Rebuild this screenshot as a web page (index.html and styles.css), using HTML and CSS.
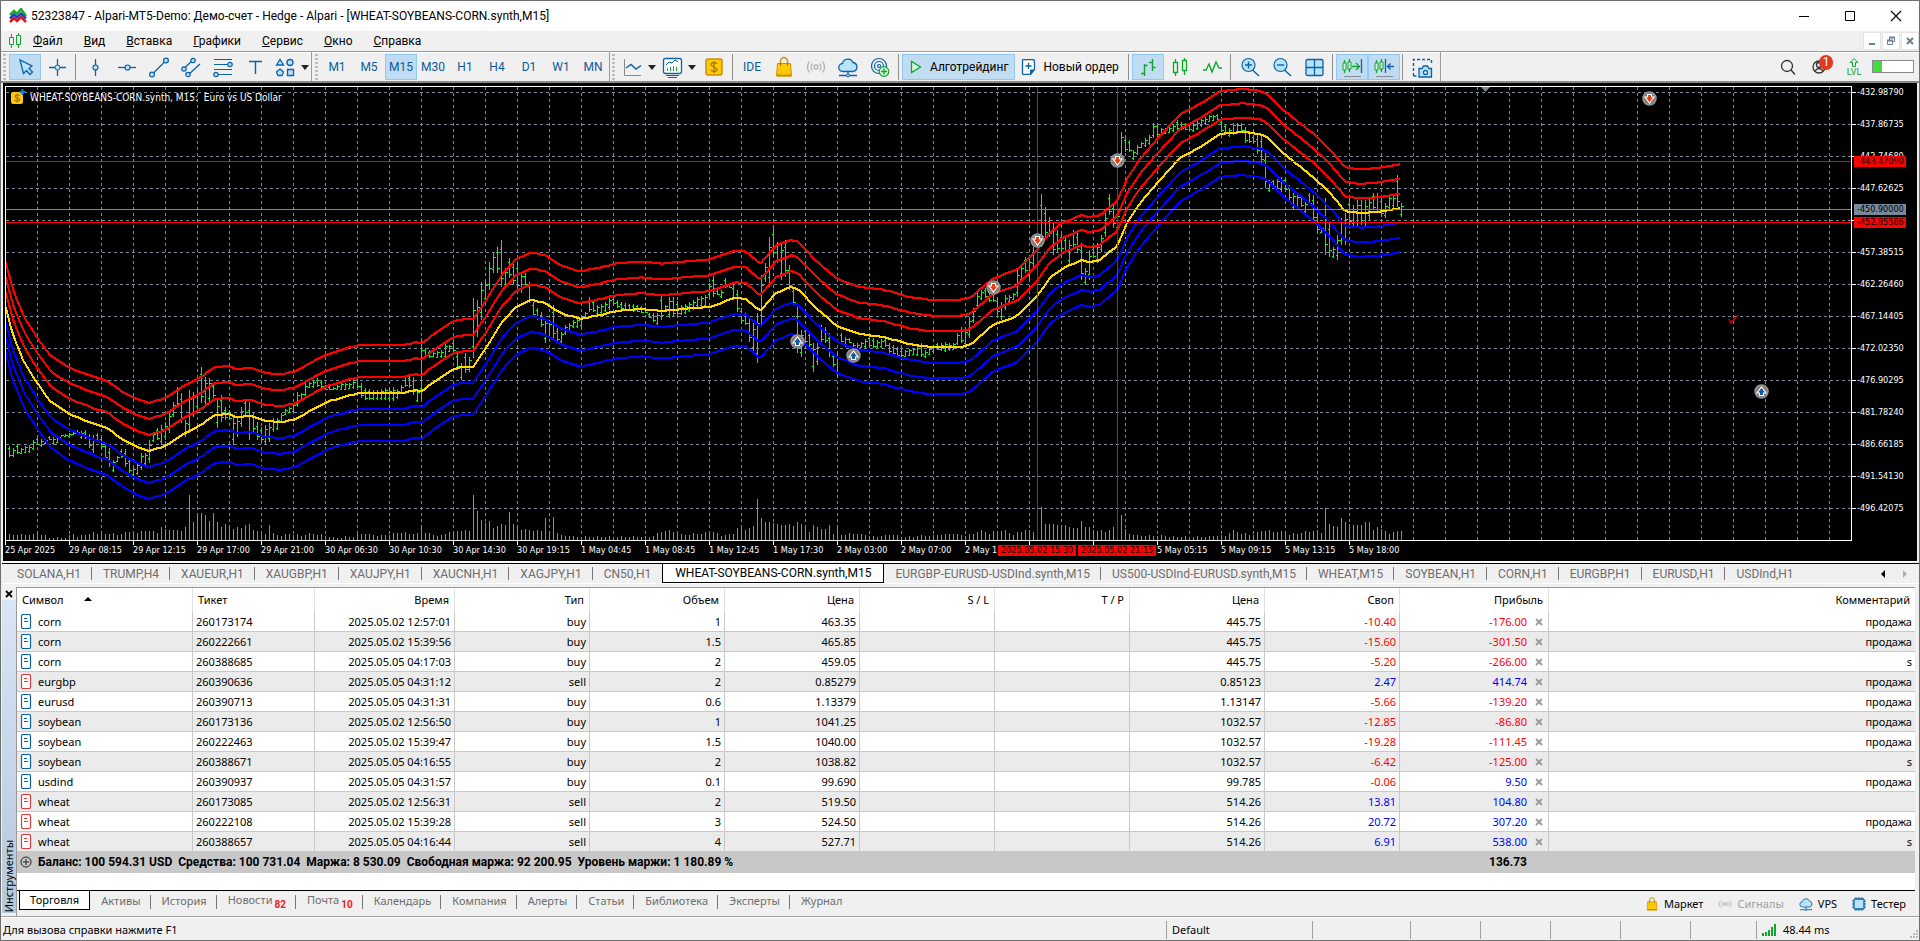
FILE: index.html
```html
<!DOCTYPE html>
<html lang="ru">
<head>
<meta charset="utf-8">
<title>52323847 - Alpari-MT5-Demo</title>
<link rel="stylesheet" href="styles.css">
</head>
<body>
<svg class="defs" aria-hidden="true">
  <symbol id="bag" viewBox="0 0 24 24"><path d="M8.500 9.500V6a3.500 3.500 0 0 1 7 0v3.500" fill="none" stroke="#d09000" stroke-width="1.500"/><path d="M5.500 8.500h13l1 12.500h-15z" fill="#ffc808" stroke="#d09000"/><path d="M8.500 11V8M15.500 11V8" stroke="#a87400"/><path d="M5 20.500h14" stroke="#d09000" stroke-width="2"/></symbol>
  <symbol id="signal" viewBox="0 0 24 24"><circle cx="12" cy="12" r="2" fill="none" stroke="#b4b4b4" stroke-width="1.500"/><path d="M8.500 8.500a5 5 0 0 0 0 7M15.500 8.500a5 5 0 0 1 0 7M5.500 6.500a8.500 8.500 0 0 0 0 11M18.500 6.500a8.500 8.500 0 0 1 0 11" fill="none" stroke="#b4b4b4" stroke-width="1.300"/></symbol>
  <symbol id="cloud" viewBox="0 0 24 24"><path d="M7 16.500a4 4 0 0 1-.5-8A5.500 5.500 0 0 1 17 7.500a4.600 4.600 0 0 1 .5 9z" fill="#b9e2fb" stroke="#0c62a6" stroke-width="1.300"/><path d="M12 16.500v3M3 20.500h18" stroke="#0c62a6" stroke-width="1.300"/><circle cx="12" cy="20.500" r="1.500" fill="#b9e2fb" stroke="#0c62a6"/></symbol>
  <symbol id="x" viewBox="0 0 8 8"><path d="M1 1l6 6M7 1L1 7" fill="none" stroke="currentColor" stroke-width="1.800"/></symbol>
</svg>

<header class="titlebar">
  <svg class="app-icon" viewBox="0 0 18 16"><g fill="none" stroke-width="2.500"><path d="M1 7l4-4 3 3 4-5 5 7" stroke="#18b020"/><path d="M1 10.500l4-4 3 3 4-4 5 5" stroke="#1c3fd0"/><path d="M1 14l4-4 3 3 4-4 5 5" stroke="#e01818"/></g></svg>
  <h1 class="title">52323847 - Alpari-MT5-Demo: Демо-счет - Hedge - Alpari - [WHEAT-SOYBEANS-CORN.synth,M15]</h1>
  <div class="win-controls">
    <button class="win-btn" aria-label="Свернуть"><svg viewBox="0 0 12 12"><path d="M1 6.500h10" stroke="#000"/></svg></button>
    <button class="win-btn" aria-label="Развернуть"><svg viewBox="0 0 12 12"><path d="M1.500 1.500h9v9h-9z" fill="none" stroke="#000"/></svg></button>
    <button class="win-btn" aria-label="Закрыть"><svg viewBox="0 0 12 12"><path d="M1 1l10 10M11 1L1 11" stroke="#000" stroke-width="1.100"/></svg></button>
  </div>
</header>

<nav class="menubar">
  <svg class="menu-icon" viewBox="0 0 14 16"><path d="M3.500 1v14M10.500 0v15" stroke="#11a52b"/><path d="M1.500 4.500h4v7h-4zM8.500 2.500h4v9h-4z" fill="#f0f0f0" stroke="#11a52b"/></svg>
  <button class="menu"><u>Ф</u>айл</button>
  <button class="menu"><u>В</u>ид</button>
  <button class="menu"><u>В</u>ставка</button>
  <button class="menu"><u>Г</u>рафики</button>
  <button class="menu"><u>С</u>ервис</button>
  <button class="menu"><u>О</u>кно</button>
  <button class="menu"><u>С</u>правка</button>
  <div class="mdi">
    <button class="mdi-btn" aria-label="Свернуть окно"><svg viewBox="0 0 12 12"><path d="M3 9h6" stroke="#6b7f92" stroke-width="2"/></svg></button>
    <button class="mdi-btn" aria-label="Восстановить окно"><svg viewBox="0 0 12 12"><path d="M4.500 5V2.500h5v4H8M2.500 5.500h5v4h-5z" fill="none" stroke="#6b7f92"/><path d="M4 2.500h6M2 5.500h6" stroke="#6b7f92" stroke-width="2"/></svg></button>
    <button class="mdi-btn" aria-label="Закрыть окно"><svg viewBox="0 0 12 12"><path d="M3 3l6 6M9 3L3 9" stroke="#6b7f92" stroke-width="2"/></svg></button>
  </div>
</nav>

<div class="toolbar">
  <div class="group">
    <span class="grip"></span>
    <button class="tool on" aria-label="Курсор"><svg class="ic" viewBox="0 0 24 24"><path d="M7 5l3.500 13.500 3-3 3.500 4 2.500-2.500-3.500-3.500 3-2.500z" fill="#b9e2fb" stroke="#0c62a6" stroke-width="1.300"/></svg></button>
    <button class="tool" aria-label="Перекрестие"><svg class="ic" viewBox="0 0 24 24"><path d="M12.500 4v17M4 12.500h17" stroke="#0c62a6" stroke-width="1.300"/><circle cx="12.500" cy="12.500" r="2.500" fill="#b9e2fb" stroke="#0c62a6"/></svg></button>
    <span class="sep"></span>
    <button class="tool" aria-label="Вертикальная линия"><svg class="ic" viewBox="0 0 24 24"><path d="M12.500 4v17" stroke="#0c62a6" stroke-width="1.300"/><circle cx="12.500" cy="12.500" r="2.500" fill="#b9e2fb" stroke="#0c62a6" stroke-width="1.200"/></svg></button>
    <button class="tool" aria-label="Горизонтальная линия"><svg class="ic" viewBox="0 0 24 24"><path d="M3 12.500h18" stroke="#0c62a6" stroke-width="1.300"/><circle cx="12.500" cy="12.500" r="2.500" fill="#b9e2fb" stroke="#0c62a6" stroke-width="1.200"/></svg></button>
    <button class="tool" aria-label="Трендовая линия"><svg class="ic" viewBox="0 0 24 24"><path d="M5 19.500L19 5.500" stroke="#0c62a6" stroke-width="1.300"/><g fill="#b9e2fb" stroke="#0c62a6" stroke-width="1.200"><circle cx="5" cy="19.500" r="2.400"/><circle cx="19" cy="5.500" r="2.400"/></g></svg></button>
    <button class="tool" aria-label="Канал"><svg class="ic" viewBox="0 0 24 24"><path d="M4.500 14L14 5M9 20L21 9" stroke="#0c62a6" stroke-width="1.300"/><g fill="#b9e2fb" stroke="#0c62a6" stroke-width="1.200"><circle cx="5" cy="14" r="2.200"/><circle cx="14" cy="5.500" r="2.200"/><circle cx="9" cy="19.500" r="2.200"/></g></svg></button>
    <button class="tool" aria-label="Фибоначчи"><svg class="ic" viewBox="0 0 24 24"><path d="M3 4.500h18M3 9.500h18M3 14.500h18M3 19.500h18" stroke="#0c62a6" stroke-width="1.200"/><g fill="#b9e2fb" stroke="#0c62a6" stroke-width="1.200"><circle cx="19" cy="9.500" r="2.200"/><circle cx="5" cy="19.500" r="2.200"/></g></svg></button>
    <button class="tool" aria-label="Текст"><svg class="ic" viewBox="0 0 24 24"><path d="M6 6.500h13M12.500 6.500V19" stroke="#0c62a6" stroke-width="1.400"/></svg></button>
    <button class="tool narrow" aria-label="Фигуры"><svg class="ic" viewBox="0 0 24 24"><g fill="#b9e2fb" stroke="#0c62a6" stroke-width="1.300"><path d="M3.500 10h7L7 4.500z"/><circle cx="17" cy="7.500" r="3"/><path d="M7 14l3.500 3L9 20.500H5L3.500 17z"/><path d="M14.500 14.500h6v6h-6z"/></g></svg></button>
    <button class="drop" aria-label="Ещё фигуры"></button>
  </div>
  <div class="group frames">
    <span class="grip"></span>
    <button class="tool tf">M1</button><button class="tool tf">M5</button><button class="tool tf on">M15</button><button class="tool tf">M30</button><button class="tool tf">H1</button><button class="tool tf">H4</button><button class="tool tf">D1</button><button class="tool tf">W1</button><button class="tool tf">MN</button>
  </div>
  <div class="group last">
    <span class="grip"></span>
    <button class="tool narrow" aria-label="Тип графика"><svg class="ic" viewBox="0 0 24 24"><path d="M4.500 4v16.500H21" fill="none" stroke="#8a8a8a"/><path d="M6 13l5-3.500 5 4.500 5-3.500" fill="none" stroke="#0c62a6" stroke-width="1.400"/></svg></button>
    <button class="drop" aria-label="Выбор графика"></button>
    <button class="tool narrow" aria-label="Индикаторы"><svg class="ic" viewBox="0 0 24 24"><rect x="3.500" y="3.500" width="18" height="15" rx="2" fill="#fff" stroke="#0c62a6" stroke-width="1.300"/><path d="M6 10l3-3 3 1 3-3 3 2" fill="none" stroke="#0c62a6"/><path d="M7.500 16v-3M10.500 16v-4M13.500 16v-5M16.500 16v-4" stroke="#11a52b"/><path d="M6 20.500h13M8 22.500h9" stroke="#0c62a6"/></svg></button>
    <button class="drop" aria-label="Выбор индикатора"></button>
    <button class="tool" aria-label="Символы"><svg class="ic" viewBox="0 0 24 24"><rect x="4" y="4" width="16" height="16" rx="2" fill="#ffc808" stroke="#c98f00" stroke-width="1.500"/><path d="M15 9c-1-2-6-2-6 .5S15 12 15 14.500 10 17 9 15M12 6v12" fill="none" stroke="#a87400" stroke-width="1.300"/></svg></button>
    <span class="sep"></span>
    <button class="tool tf">IDE</button>
    <button class="tool" aria-label="Маркет"><svg class="ic"><use href="#bag"/></svg></button>
    <button class="tool" aria-label="Сигналы"><svg class="ic"><use href="#signal"/></svg></button>
    <button class="tool" aria-label="VPS"><svg class="ic"><use href="#cloud"/></svg></button>
    <button class="tool" aria-label="Трансляция"><svg class="ic" viewBox="0 0 24 24"><g fill="none" stroke="#0c62a6" stroke-width="1.200"><circle cx="11" cy="11" r="7.500"/><circle cx="11" cy="11" r="4.500"/><circle cx="11" cy="11" r="1.500"/></g><circle cx="16" cy="16.500" r="4.800" fill="#d9f7dd" stroke="#11a52b" stroke-width="1.200"/><path d="M16 13.500v6M13 16.500h6" stroke="#11a52b" stroke-width="1.400"/></svg></button>
    <span class="sep"></span>
    <button class="tool wide on"><svg class="ic16" viewBox="0 0 16 16"><path d="M3.500 2.500v11L12.500 8z" fill="#d9f7dd" stroke="#11a52b" stroke-width="1.300"/></svg>Алготрейдинг</button>
    <button class="tool wide plain"><svg class="ic16" viewBox="0 0 16 16"><path d="M2.500.500h9q2 0 2 2v8l-4 5h-7q-1 0-1-1v-13q0-1 1-1z" fill="#fff" stroke="#0c62a6" stroke-width="1.300"/><path d="M13 11h-3.500v4.500" fill="#0c62a6" stroke="#0c62a6"/><path d="M7.500 4v6M4.500 7h6" stroke="#0c62a6" stroke-width="1.300"/></svg>Новый ордер</button>
    <span class="sep"></span>
    <button class="tool on" aria-label="Бары"><svg class="ic" viewBox="0 0 24 24"><path d="M8.500 9v12M5 18.500h3.500M8.500 10.500h3M16.500 4v12M13 7.500h3.500M16.500 12.500h3" fill="none" stroke="#11a52b" stroke-width="1.400"/></svg></button>
    <button class="tool" aria-label="Свечи"><svg class="ic" viewBox="0 0 24 24"><path d="M7.500 4v17M16.500 3v17" stroke="#11a52b" stroke-width="1.300"/><path d="M5.500 7.500h4v10h-4zM14.500 5.500h4v10h-4z" fill="#e8fbe9" stroke="#11a52b" stroke-width="1.300"/></svg></button>
    <button class="tool" aria-label="Линия"><svg class="ic" viewBox="0 0 24 24"><path d="M3 15h3l3-6 3 8 4-10 3 6h3" fill="none" stroke="#11a52b" stroke-width="1.400"/></svg></button>
    <span class="sep"></span>
    <button class="tool" aria-label="Увеличить"><svg class="ic" viewBox="0 0 24 24"><path d="M14.500 15l6.500 6" stroke="#0c62a6" stroke-width="1.500"/><circle cx="10.500" cy="10" r="6.500" fill="#b9e2fb" stroke="#0c62a6" stroke-width="1.200"/><path d="M10.500 6.500v7M7 10h7" stroke="#0c62a6" stroke-width="1.400"/></svg></button>
    <button class="tool" aria-label="Уменьшить"><svg class="ic" viewBox="0 0 24 24"><path d="M14.500 15l6.500 6" stroke="#0c62a6" stroke-width="1.500"/><circle cx="10.500" cy="10" r="6.500" fill="#b9e2fb" stroke="#0c62a6" stroke-width="1.200"/><path d="M7 10h7" stroke="#0c62a6" stroke-width="1.400"/></svg></button>
    <button class="tool" aria-label="Плитка"><svg class="ic" viewBox="0 0 24 24"><rect x="4" y="4.500" width="17" height="16" rx="1.500" fill="#b9e2fb" stroke="#0c62a6" stroke-width="1.300"/><path d="M12.500 4.500v16M4 12.500h17" stroke="#0c62a6" stroke-width="1.300"/></svg></button>
    <span class="sep"></span>
    <button class="tool on" aria-label="Автопрокрутка"><svg class="ic" viewBox="0 0 24 24"><path d="M4.500 5v13M9.500 4v13M12 11.500h7M16 8l3.500 3.500L16 15" fill="none" stroke="#11a52b" stroke-width="1.300"/><path d="M3 8h3v7H3zM8 7h3v7H8z" fill="#d9f7dd" stroke="#11a52b"/><path d="M21.500 4v14" stroke="#0c62a6" stroke-width="1.300"/><path d="M4 21.500h17" stroke="#8a8a8a"/></svg></button>
    <button class="tool on" aria-label="Сдвиг графика"><svg class="ic" viewBox="0 0 24 24"><path d="M4.500 5v13M9.500 4v13" stroke="#11a52b" stroke-width="1.300"/><path d="M3 8h3v7H3zM8 7h3v7H8z" fill="#d9f7dd" stroke="#11a52b"/><path d="M13.500 4v14M22 11.500h-6M18.500 8.500l-3 3 3 3" fill="none" stroke="#0c62a6" stroke-width="1.300"/><path d="M4 21.500h17" stroke="#8a8a8a"/></svg></button>
    <span class="sep"></span>
    <button class="tool" aria-label="Снимок"><svg class="ic" viewBox="0 0 24 24"><path d="M3.500 21V4.500h18V10M3.500 21h5" fill="none" stroke="#0c62a6" stroke-width="1.400" stroke-dasharray="3 2"/><path d="M9 13.500h3l1.500-2.500h4l1.500 2.500h2.500v8.500H9z" fill="#b9e2fb" stroke="#0c62a6" stroke-width="1.300"/><circle cx="15.500" cy="17.500" r="2" fill="#fff" stroke="#0c62a6" stroke-width="1.300"/></svg></button>
  </div>
  <div class="toolbar-right">
    <button class="tool" aria-label="Поиск"><svg class="ic" viewBox="0 0 24 24"><circle cx="11" cy="11" r="5.500" fill="none" stroke="#333" stroke-width="1.300"/><path d="M15 15l4 4.500" stroke="#333" stroke-width="1.400"/></svg></button>
    <button class="tool user" aria-label="Профиль"><svg class="ic" viewBox="0 0 24 24"><g fill="none" stroke="#333" stroke-width="1.300"><circle cx="11" cy="12" r="6"/><circle cx="11" cy="10" r="2.500"/><path d="M7 16q4-5 8 0"/></g></svg><span class="badge">1</span></button>
    <button class="tool lvl"><svg class="lvl-ic" viewBox="0 0 10 9"><path d="M5 .700L9 4.500H6.500v4h-3v-4H1z" fill="none" stroke="#11a52b"/></svg>LVL</button>
    <span class="level"><span class="level-fill"></span></span>
  </div>
</div>

<main class="chart">
  <div class="chart-main">
    <div class="plot">
      <svg id="plot" class="plot-svg"></svg>
      <p class="chart-title"><svg class="coin" viewBox="0 0 16 16"><rect x="1" y="3" width="12" height="12" rx="2" fill="#ffc808"/><path d="M9.500 7C9 5.500 5 5.500 5 7.500S9.500 8.500 9.500 10.500 5 12.500 4.500 11M7.200 4.500v9" fill="none" stroke="#a87400" stroke-width="1.200"/><path d="M12.500 0v6M9.500 3h6" stroke="#0c82d6" stroke-width="2"/></svg>WHEAT-SOYBEANS-CORN.synth, M15:&nbsp; Euro vs US Dollar</p>
    </div>
    <div class="price-axis" id="prices">
      <span class="tag tag-a">-443.47090</span>
      <span class="tag tag-b">-450.90000</span>
      <span class="tag tag-c">-452.85586</span>
    </div>
  </div>
  <div class="time-axis" id="times">
    <span class="tag time-a">2025.05.02 15:30</span>
    <span class="tag time-b">2025.05.02 21:15</span>
  </div>
</main>

<nav class="chart-tabs">
  <button class="ctab">SOLANA,H1</button><button class="ctab">TRUMP,H4</button><button class="ctab">XAUEUR,H1</button><button class="ctab">XAUGBP,H1</button><button class="ctab">XAUJPY,H1</button><button class="ctab">XAUCNH,H1</button><button class="ctab">XAGJPY,H1</button><button class="ctab">CN50,H1</button><button class="ctab active">WHEAT-SOYBEANS-CORN.synth,M15</button><button class="ctab">EURGBP-EURUSD-USDInd.synth,M15</button><button class="ctab">US500-USDInd-EURUSD.synth,M15</button><button class="ctab">WHEAT,M15</button><button class="ctab">SOYBEAN,H1</button><button class="ctab">CORN,H1</button><button class="ctab">EURGBP,H1</button><button class="ctab">EURUSD,H1</button><button class="ctab">USDInd,H1</button>
  <div class="scrollers"><button class="arrow" aria-label="Назад"></button><button class="arrow next" aria-label="Вперёд"></button></div>
</nav>

<section class="toolbox">
  <aside class="side">
    <button class="side-close" aria-label="Закрыть панель"><svg class="x8"><use href="#x"/></svg></button>
    <div class="side-strip"><span class="side-text">Инструменты</span></div>
  </aside>
  <div class="panel">
    <table class="trades">
      <colgroup><col class="c-sym"><col class="c-tick"><col class="c-time"><col class="c-n"><col class="c-n"><col class="c-n"><col class="c-n"><col class="c-n"><col class="c-n"><col class="c-n"><col class="c-profit"><col></colgroup>
      <thead><tr><th class="left">Символ<span class="sort"></span></th><th class="left">Тикет</th><th>Время</th><th>Тип</th><th>Объем</th><th>Цена</th><th>S / L</th><th>T / P</th><th>Цена</th><th>Своп</th><th>Прибыль</th><th>Комментарий</th></tr></thead>
      <tbody id="rows"></tbody>
      <tfoot><tr><td colspan="10" class="left"><span class="sym"><svg class="plus" viewBox="0 0 12 12"><circle cx="6" cy="6" r="5" fill="none" stroke="#222"/><path d="M6 3v6M3 6h6" stroke="#222"/></svg>Баланс: 100 594.31 USD&nbsp; Средства: 100 731.04&nbsp; Маржа: 8 530.09&nbsp; Свободная маржа: 92 200.95&nbsp; Уровень маржи: 1 180.89 %</span></td><td class="total">136.73</td><td></td></tr></tfoot>
    </table>
    <div class="bottom">
      <nav class="btabs">
        <button class="btab active">Торговля</button><button class="btab">Активы</button><button class="btab">История</button><button class="btab">Новости<sub>82</sub></button><button class="btab">Почта<sub>10</sub></button><button class="btab">Календарь</button><button class="btab">Компания</button><button class="btab">Алерты</button><button class="btab">Статьи</button><button class="btab">Библиотека</button><button class="btab">Эксперты</button><button class="btab">Журнал</button>
      </nav>
      <div class="services">
        <button class="service"><svg class="ic16"><use href="#bag"/></svg>Маркет</button>
        <button class="service off"><svg class="ic16"><use href="#signal"/></svg>Сигналы</button>
        <button class="service"><svg class="ic16"><use href="#cloud"/></svg>VPS</button>
        <button class="service"><svg class="ic16" viewBox="0 0 16 16"><path d="M5 1v14M8 1v14M11 1v14M1 5h14M1 8h14M1 11h14" stroke="#0c62a6"/><rect x="3" y="3" width="10" height="10" rx="1" fill="#b9e2fb" stroke="#0c62a6" stroke-width="1.300"/></svg>Тестер</button>
      </div>
    </div>
  </div>
</section>

<footer class="status">
  <span class="hint">Для вызова справки нажмите F1</span>
  <span class="cell c1">Default</span><span class="cell c2"></span><span class="cell c3"></span><span class="cell c3"></span><span class="cell c3"></span><span class="cell c3"></span><span class="cell c4"></span>
  <span class="cell c5"><svg class="ping" viewBox="0 0 15 12"><path d="M1 12V9M4 12V8M7 12V6M10 12V3M13 12V0" stroke="#11a52b" stroke-width="2"/></svg>48.44 ms</span>
  <svg class="sizer" viewBox="0 0 9 9"><path d="M7 0h2v2H7zM4 3h2v2H4zM7 3h2v2H7zM1 6h2v2H1zM4 6h2v2H4zM7 6h2v2H7z" fill="#b8b8b8"/></svg>
</footer>
<script src="app.js"></script>
</body>
</html>
```
FILE: styles.css
```css
* { box-sizing: border-box; }
body {
  margin: 0;
  min-height: 100vh;
  display: flex;
  flex-direction: column;
  background: #f0f0f0;
  font: 12px/16px Roboto, "Noto Sans", sans-serif;
  color: #000;
  border: 1px solid #6e6e6e;
  overflow-x: hidden;
}
button { font: inherit; color: inherit; background: none; border: 0; padding: 0; margin: 0; }
svg { display: block; flex: none; }
.defs { position: absolute; width: 0; height: 0; }

.titlebar { display: flex; align-items: center; height: 30px; background: #fff; padding-left: 8px; }
.app-icon { width: 18px; height: 16px; }
.title { flex: 1; margin: 0 0 0 4px; font-size: 12px; font-weight: 400; white-space: nowrap; }
.win-controls { display: flex; }
.win-btn { width: 46px; height: 30px; display: flex; align-items: center; justify-content: center; }
.win-btn svg { width: 12px; height: 12px; }

.menubar { display: flex; align-items: center; height: 20px; padding-left: 7px; }
.menu-icon { width: 14px; height: 16px; margin-right: 1px; }
.menu { padding: 0 11px 0 10px; }
.mdi { display: flex; gap: 1px; margin-left: auto; }
.mdi-btn { width: 18px; height: 18px; background: #fff; border: 1px solid #e4e4e4; display: flex; align-items: center; justify-content: center; }
.mdi-btn svg { width: 12px; height: 12px; }

.toolbar { display: flex; align-items: stretch; height: 32px; border-top: 1px solid #9c9c9c; border-bottom: 2px solid #8a8a8a; box-shadow: inset 0 1px #fff; }
.group { display: flex; align-items: center; padding: 1px 0 0 2px; border-right: 1px solid #9c9c9c; }
.frames { padding-left: 3px; }
.group.last { padding-right: 2px; }
.grip { width: 3px; height: 26px; margin-right: 3px; background: repeating-linear-gradient(#bdbdbd 0 2px, transparent 2px 4px); }
.sep { width: 1px; height: 26px; margin: 0 3px 0 2px; background: #8f8f8f; }
.tool { width: 32px; height: 26px; display: flex; align-items: center; justify-content: center; border: 1px solid transparent; background-clip: padding-box; }
.tool.narrow { width: 27px; }
.tool.on { background: #c0dcf3; border-color: #90c8f6; }
.tool.wide { width: auto; padding: 0 6px 0 5px; gap: 6px; white-space: nowrap; }
.tool.plain { padding: 0 6px 0 5px; }
.tf { color: #0c5a9a; }
.ic { width: 24px; height: 24px; }
.ic16 { width: 16px; height: 16px; }
.drop { width: 13px; height: 26px; display: flex; align-items: center; justify-content: center; }
.drop::before { content: ""; border: 4px solid transparent; border-top: 5px solid #222; border-bottom: 0; }
.toolbar-right { display: flex; align-items: center; margin-left: auto; padding-right: 5px; }
.user { position: relative; }
.badge { position: absolute; left: 14px; top: 0; width: 14px; height: 15px; border-radius: 7px; background: #e03a20; color: #fff; line-height: 15px; }
.tool.lvl { flex-direction: column; width: 36px; color: #11a52b; font-size: 9px; line-height: 8px; gap: 1px; }
.lvl-ic { width: 10px; height: 9px; }
.level { width: 42px; height: 13px; border: 1px solid #8a8a8a; background: #fff; display: flex; }
.level-fill { width: 9px; background: #42dc42; }

.chart { background: #000; color: #fff; margin: 0 2px; font: 9px/11px "DejaVu Sans Condensed", "DejaVu Sans", sans-serif; border-bottom: 1px solid #fff; }
.chart-main { display: flex; }
.plot { flex: 1; min-width: 0; position: relative; margin: 3px 0 0 2px; border: 1px solid #fff; overflow: hidden; }
.plot-svg { width: 100%; height: 453px; }
.chart-title { position: absolute; left: 4px; top: 2px; margin: 0; display: flex; align-items: center; gap: 4px; font-size: 10px; white-space: pre; }
.coin { width: 16px; height: 16px; }
.price-axis { width: 65px; position: relative; display: flex; flex-direction: column; padding-top: 4px; }
.price { height: 32px; padding: 0 0 0 5px; position: relative; }
.price::before { content: ""; position: absolute; left: 0; top: 5px; width: 4px; height: 1px; background: #fff; }
.tag { position: absolute; background: #f00; color: #000; height: 11px; padding: 0 0 0 3px; white-space: nowrap; z-index: 1; }
.price-axis .tag { left: 2px; width: 52px; }
.tag-a { top: 73px; }
.price-axis .tag-b { top: 121px; background: #778899; }
.tag-c { top: 134px; }
.time-axis { position: relative; display: flex; height: 20px; padding-left: 2px; overflow: hidden; }
.time { width: 64px; flex: none; padding-top: 4px; white-space: nowrap; position: relative; }
.time::before { content: ""; position: absolute; left: 0; top: 0; width: 1px; height: 4px; background: #fff; }
.time-a, .time-b { top: 4px; width: 78px; }
.time-a { left: 995px; }
.time-b { left: 1075px; }

.chart-tabs { display: flex; height: 21px; margin: 1px 0 0 1px; border-top: 1px solid #000; border-bottom: 1px solid #fff; color: #6d6d6d; padding-left: 4px; }
.ctab { position: relative; padding: 0 11px; white-space: nowrap; height: 19px; }
.ctab::after { content: ""; position: absolute; right: 0; top: 3px; height: 13px; width: 1px; background: #777; }
.ctab.active { background: #fff; color: #000; border: 1px solid #000; border-top: 0; padding: 0 12px; }
.ctab.active::after, .ctab:nth-child(8)::after, .ctab:nth-child(17)::after { display: none; }
.scrollers { display: flex; gap: 18px; margin-left: auto; align-items: center; padding-right: 12px; }
.arrow { border: 4px solid transparent; border-right-color: #000; border-left: 0; }
.arrow.next { border: 4px solid transparent; border-left-color: #b0b0b0; border-right: 0; }

.toolbox { display: flex; flex: 1; padding: 3px 4px 0 1px; }
.side { width: 14px; display: flex; flex-direction: column; }
.side-close { height: 13px; display: flex; align-items: center; justify-content: center; }
.x8 { width: 8px; height: 8px; }
.side-strip { flex: 1; margin-bottom: 3px; background: linear-gradient(#d8e6f4, #b4c8dc); display: flex; align-items: flex-end; padding-bottom: 1px; }
.side-text { writing-mode: vertical-rl; transform: rotate(180deg); font: 11px/14px "Noto Sans", sans-serif; }
.panel { flex: 1; min-width: 0; display: flex; flex-direction: column; justify-content: space-between; border-top: 1px solid #9a9a9a; border-left: 1px solid #9a9a9a; background: #fff; }
.trades { width: 100%; table-layout: fixed; border-collapse: separate; border-spacing: 0; font: 11px/16px "Noto Sans", sans-serif; }
.c-sym { width: 176px; } .c-tick { width: 122px; } .c-time { width: 140px; } .c-n { width: 135px; } .c-profit { width: 149px; }
.trades th { height: 24px; font-weight: 400; text-align: right; padding: 0 5px; border-right: 1px solid #e2e2e2; white-space: nowrap; }
.trades th.left { text-align: left; }
.trades td { height: 20px; padding: 0 3px; text-align: right; border-right: 1px solid #c8c8c8; border-bottom: 1px solid #c8c8c8; white-space: nowrap; }
.trades td.left { text-align: left; }
.trades tbody tr:nth-child(even) { background: #ebebeb; }
.trades td:last-child, .trades th:last-child { border-right: 0; }
.sort { display: inline-block; margin-left: 20px; vertical-align: 3px; border: 4px solid transparent; border-bottom-color: #000; border-top: 0; }
.sym, .profit { display: flex; align-items: center; }
.sym { gap: 6px; }
.profit { justify-content: flex-end; gap: 8px; padding-right: 2px; }
.close { color: #9a9a9a; }
.doc { width: 12px; height: 15px; }
.red { color: #f00; }
.blue { color: #00f; }
.trades tfoot td { background: #c8c8c8; border: 0; height: 21px; padding-bottom: 2px; font: 700 12px/16px Roboto, sans-serif; }
.trades tfoot td.total { padding-right: 22px; }
.plus { width: 12px; height: 12px; }
.bottom { display: flex; justify-content: space-between; height: 26px; border-top: 1px solid #000; background: #f0f0f0; font: 11px/16px "Noto Sans", sans-serif; }
.btabs { display: flex; padding-left: 2px; }
.btab { position: relative; height: 19px; padding: 0 10px 0 11px; color: #6d6d6d; white-space: nowrap; }
.btab::after { content: ""; position: absolute; right: 0; top: 4px; height: 14px; width: 1px; background: #777; }
.btab.active { background: #fff; color: #000; border: 1px solid #000; border-top: 0; padding: 0 10px; }
.btab.active::after, .btab:last-child::after { display: none; }
.btab sub { color: #f02020; font: 700 10px/9px Roboto, sans-serif; margin-left: 2px; }
.services { display: flex; align-items: center; gap: 14px; padding-right: 9px; }
.service { display: flex; align-items: center; gap: 4px; }
.service.off { color: #a0a0a0; }

.status { position: relative; display: flex; height: 24px; border-top: 1px solid #a0a0a0; box-shadow: inset 0 1px #fff; padding: 4px 0 1px 2px; font: 11px/18px "Noto Sans", sans-serif; }
.hint { flex: 1; }
.cell { border-left: 1px solid #a0a0a0; padding-left: 5px; }
.c1 { width: 146px; } .c2 { width: 98px; } .c3 { width: 70px; } .c4 { width: 66px; }
.c5 { width: 163px; display: flex; align-items: center; gap: 6px; }
.ping { width: 15px; height: 12px; }
.sizer { position: absolute; right: 1px; bottom: 1px; width: 9px; height: 9px; }
```
FILE: app.js
```js
// Price bars: x, high, low (screen rows); gaps are filled by interpolation.
const barKeys = `9 446 457,13 448 457,17 444 454,21 448 454,25 446 453,29 445 453,33 440 450,37 438 445,41 439 447,45 439 444,49 436 440,53 437 445,57 436 443,61 435 437,69 433 437,77 430 433,81 431 439,85 430 439,89 434 448,93 435 453,97 433 442,101 437 448,105 443 460,109 448 467,113 460 472,117 456 462,121 449 458,125 449 467,129 458 473,133 467 476,137 463 475,141 453 470,145 453 465,149 440 463,153 432 442,157 428 440,161 425 445,165 422 440,169 412 433,173 402 417,177 387 407,181 393 423,185 420 437,189 390 433,193 392 417,197 390 410,201 367 403,205 377 407,209 378 403,213 383 398,217 400 428,221 395 422,225 407 420,229 410 420,233 417 445,237 417 437,241 407 427,245 400 415,249 402 440,253 413 432,257 422 440,261 427 442,265 425 445,269 423 442,273 418 432,277 418 430,281 413 423,285 409 415,289 407 413,293 403 413,297 392 407,301 393 400,305 383 397,309 382 388,317 378 387,321 380 388,325 385 390,333 387 390,341 383 390,349 383 389,357 376 388,361 383 398,365 388 400,375 390 400,385 388 400,393 387 401,399 390 398,405 375 387,409 375 388,413 377 395,417 390 402,421 338 400,425 348 358,433 352 357,441 350 358,445 342 360,449 345 352,453 340 353,457 352 370,461 363 380,465 353 373,469 357 372,473 298 358,477 300 337,481 282 320,485 280 303,489 262 290,493 253 273,497 247 273,501 240 287,505 268 288,509 258 278,513 262 285,517 263 290,521 272 293,525 273 287,529 282 303,533 302 317,537 308 320,541 312 327,545 318 343,549 320 340,553 305 340,557 328 342,561 332 343,565 325 335,573 320 328,581 315 328,585 312 318,589 297 312,593 300 312,597 305 315,605 302 312,609 297 310,613 297 305,621 302 310,637 305 312,645 307 313,649 313 318,657 313 325,661 295 320,665 305 312,669 297 318,673 297 317,681 305 315,689 302 312,697 297 307,705 295 307,709 283 297,713 276 297,717 290 295,721 290 298,725 278 288,729 283 288,733 285 300,737 290 312,741 308 323,745 313 325,749 318 342,753 323 353,757 313 363,761 275 325,765 263 282,769 237 287,773 228 258,777 242 263,781 243 280,785 240 277,789 265 290,793 288 305,797 307 353,801 330 357,805 327 345,809 332 347,813 343 372,817 343 365,821 325 342,825 327 343,829 333 357,833 353 367,837 353 377,841 333 343,845 337 347,849 338 343,853 343 353,861 342 348,869 335 348,877 340 348,885 338 347,889 343 353,897 347 357,905 350 357,913 348 355,921 343 357,925 350 358,937 343 350,945 342 352,953 343 350,957 333 345,961 327 343,965 328 347,969 317 338,973 308 323,977 293 308,981 290 300,985 288 298,989 290 302,993 293 302,997 297 315,1001 302 320,1005 295 310,1009 295 303,1013 293 300,1017 270 297,1021 265 282,1025 257 273,1029 257 280,1033 247 267,1037 240 247,1041 194 247,1045 207 238,1049 217 237,1053 223 255,1057 230 252,1061 233 252,1065 237 253,1069 240 265,1073 230 247,1077 233 253,1081 243 280,1085 268 285,1089 250 280,1093 247 258,1097 243 263,1101 235 252,1105 213 237,1109 194 215,1113 203 228,1117 213 230,1121 132 158,1125 137 152,1129 140 152,1133 150 160,1137 145 155,1141 142 148,1145 138 147,1149 135 145,1153 123 138,1157 123 137,1161 128 135,1169 127 133,1177 120 130,1185 123 130,1193 123 132,1201 118 127,1209 115 122,1217 114 120,1221 120 132,1229 128 137,1233 123 135,1241 123 132,1245 127 143,1253 135 143,1261 135 165,1265 153 188,1269 180 192,1273 180 187,1281 177 192,1285 177 192,1289 185 200,1293 193 210,1301 195 207,1305 202 213,1309 193 205,1313 195 222,1317 213 233,1321 227 233,1325 198 255,1329 222 257,1333 247 258,1337 235 260,1341 218 245,1345 213 245,1349 198 227,1353 205 227,1357 200 227,1361 200 225,1365 200 228,1369 197 220,1373 193 210,1377 193 213,1381 197 217,1385 203 218,1389 195 210,1393 195 208,1397 175 207,1401 203 217`;
const volKeys = `9 5,33 5,37 7,50 2,65 2,73 6,77 3,93 7,105 5,113 7,117 4,125 8,133 6,141 8,149 9,157 7,161 13,165 10,181 9,185 13,189 44,193 18,197 27,201 26,205 25,209 19,213 26,217 18,221 13,225 15,233 11,241 12,245 15,249 15,253 10,265 6,269 15,273 6,281 4,289 6,301 4,309 6,325 4,333 2,353 3,361 6,380 4,400 7,417 6,421 15,425 7,440 3,449 8,465 9,469 9,473 45,477 28,481 20,485 17,489 18,493 12,501 15,505 15,509 28,513 15,521 10,541 9,545 22,549 8,553 23,557 7,561 4,580 3,650 3,657 6,665 9,669 9,681 5,701 6,713 8,721 4,733 6,737 12,745 10,753 13,757 41,761 22,765 17,769 18,777 15,785 15,793 14,797 18,805 12,809 8,813 14,825 10,829 15,833 6,837 12,841 5,857 6,873 3,893 5,901 3,930 4,953 6,965 4,973 6,981 9,989 6,997 9,1005 9,1013 5,1025 10,1033 8,1041 32,1045 16,1057 15,1065 14,1073 12,1077 11,1081 19,1085 13,1093 10,1105 8,1113 12,1121 25,1125 10,1129 6,1137 4,1157 4,1177 3,1200 3,1225 4,1233 9,1241 6,1253 5,1261 9,1281 8,1289 5,1301 7,1317 9,1321 7,1325 32,1329 15,1337 13,1341 21,1345 18,1353 14,1361 15,1365 17,1369 18,1373 10,1377 12,1385 9,1389 5,1393 8,1397 9,1401 8`;
const midKeys = `5 305,13 335,24 362,37 383,51 402,69 414,94 424,107 428,122 439,137 447,149 451,163 447,175 440,184 433,192 430,204 423,214 415,229 414,237 417,250 416,265 421,282 422,296 419,310 411,327 402,343 397,359 393,404 393,415 390,422 391,435 381,453 369,463 367,473 367,486 348,502 322,516 307,531 300,545 303,561 313,580 319,600 315,616 311,641 309,662 311,694 308,709 307,735 298,746 299,760 311,776 293,791 287,798 289,816 308,837 326,859 334,884 337,909 344,930 347,960 347,970 345,993 325,1017 316,1037 296,1050 278,1063 268,1082 260,1090 262,1100 260,1108 253,1117 246,1127 223,1140 203,1158 182,1180 158,1200 147,1220 134,1243 132,1260 134,1267 137,1283 153,1313 177,1330 193,1345 211,1360 213,1377 212,1402 208`;
const stepKeys = [[5, 15], [147, 16], [965, 15.7], [1117, 14.8], [1221, 14.3], [1402, 14.7]];

const parse = (s) => s.split(",").map((p) => p.split(" ").map(Number));
function at(keys, x, field) {
  let i = 1;
  while (i < keys.length - 1 && keys[i][0] < x) i++;
  const a = keys[i - 1], b = keys[i];
  const t = Math.max(0, Math.min(1, (x - a[0]) / (b[0] - a[0])));
  return a[field] + (b[field] - a[field]) * t;
}

const bars = parse(barKeys), vols = parse(volKeys), mids = parse(midKeys);
let grid = "", prices = "", volume = "";
for (let x = 37; x < 2600; x += 32) grid += `M${x + 0.5} 87V540`;
for (let y = 92; y < 520; y += 32) grid += `M6 ${y + 0.5}H2600`;
for (let x = 9, n = 0; x <= 1401; x += 4, n++) {
  const hi = Math.round(at(bars, x, 1)), lo = Math.round(at(bars, x, 2));
  const next = at(bars, x + 4, 1) + at(bars, x + 4, 2), now = hi + lo;
  const pad = Math.round((lo - hi) * 0.2);
  const left = next > now ? hi + pad : lo - pad;
  const right = next > now ? lo - pad : hi + pad;
  prices += `M${x + 0.5} ${hi}V${lo}M${x - 1} ${left + 0.5}h1M${x + 1} ${right + 0.5}h2`;
  volume += `M${x + 0.5} 540v${-Math.round(at(vols, x, 1) + (n % 3 === 0 ? 1 : 0))}`;
}
let bands = "";
for (let k = -3; k <= 3; k++) {
  const pts = [];
  for (let x = 5; x <= 1402; x += 3) pts.push(`${x} ${Math.round(at(mids, x, 1) + k * at(stepKeys, x, 1))}`);
  bands += `<polyline points="${pts.join(" ")}" stroke="${k < 0 ? "#f00" : k ? "#00f" : "#ffd800"}"/>`;
}
const marker = (x, y, down) => `<g transform="translate(${x + 0.5} ${y + 0.5})"><circle r="6.500" fill="#8f7b6b" stroke="#8896a4" stroke-width="1.500"/><path transform="${down ? "" : "scale(1 -1)"}" d="M-2 -4H2V-1.500H4.500L0 4.500L-4.500 -1.500H-2Z" fill="${down ? "#e63c14" : "#0c5aa8"}" stroke="#fff" stroke-width="1.100"/></g>`;
document.getElementById("plot").innerHTML = `<g transform="translate(-6 -87)" fill="none">
<g shape-rendering="crispEdges">
<path d="${grid}" stroke="#778899" stroke-dasharray="3 3"/>
<path d="${volume}" stroke="#32cd32"/>
<path d="${prices}" stroke="#0f0"/>
<g stroke-width="2">${bands}</g>
<path d="M6 209.500H2600" stroke="#778899"/>
<path d="M6 161.500H2600M6 222.500H2600M1037.500 87V540M1117.500 87V540" stroke="#f00"/>
</g>
<path d="M1481 87h9l-4.500 5z" fill="#778899"/>
<path d="M1729 319l2 4 7-8" stroke="#e00000" stroke-width="1.500"/>
${marker(1117, 160, 1)}${marker(1037, 240, 1)}${marker(993, 287, 1)}${marker(1649, 98, 1)}${marker(797, 341)}${marker(853, 355)}${marker(1761, 391)}</g>`;

const priceLabels = ["-432.98790", "-437.86735", "-442.74680", "-447.62625", "", "-457.38515", "-462.26460", "-467.14405", "-472.02350", "-476.90295", "-481.78240", "-486.66185", "-491.54130", "-496.42075"];
document.getElementById("prices").insertAdjacentHTML("beforeend", priceLabels.map((p) => `<span class="price">${p}</span>`).join(""));
const timeLabels = ["25 Apr 2025", "29 Apr 08:15", "29 Apr 12:15", "29 Apr 17:00", "29 Apr 21:00", "30 Apr 06:30", "30 Apr 10:30", "30 Apr 14:30", "30 Apr 19:15", "1 May 04:45", "1 May 08:45", "1 May 12:45", "1 May 17:30", "2 May 03:00", "2 May 07:00", "2 May 1", "", "", "5 May 05:15", "5 May 09:15", "5 May 13:15", "5 May 18:00"];
document.getElementById("times").insertAdjacentHTML("beforeend", timeLabels.map((t) => `<span class="time">${t}</span>`).join(""));

const trades = [
  ["corn", "260173174", "2025.05.02 12:57:01", "buy", "1", "463.35", "445.75", "-10.40", "-176.00", "продажа"],
  ["corn", "260222661", "2025.05.02 15:39:56", "buy", "1.5", "465.85", "445.75", "-15.60", "-301.50", "продажа"],
  ["corn", "260388685", "2025.05.05 04:17:03", "buy", "2", "459.05", "445.75", "-5.20", "-266.00", "s"],
  ["eurgbp", "260390636", "2025.05.05 04:31:12", "sell", "2", "0.85279", "0.85123", "2.47", "414.74", "продажа"],
  ["eurusd", "260390713", "2025.05.05 04:31:31", "buy", "0.6", "1.13379", "1.13147", "-5.66", "-139.20", "продажа"],
  ["soybean", "260173136", "2025.05.02 12:56:50", "buy", "1", "1041.25", "1032.57", "-12.85", "-86.80", "продажа"],
  ["soybean", "260222463", "2025.05.02 15:39:47", "buy", "1.5", "1040.00", "1032.57", "-19.28", "-111.45", "продажа"],
  ["soybean", "260388671", "2025.05.05 04:16:55", "buy", "2", "1038.82", "1032.57", "-6.42", "-125.00", "s"],
  ["usdind", "260390937", "2025.05.05 04:31:57", "buy", "0.1", "99.690", "99.785", "-0.06", "9.50", "продажа"],
  ["wheat", "260173085", "2025.05.02 12:56:31", "sell", "2", "519.50", "514.26", "13.81", "104.80", ""],
  ["wheat", "260222108", "2025.05.02 15:39:28", "sell", "3", "524.50", "514.26", "20.72", "307.20", "продажа"],
  ["wheat", "260388657", "2025.05.05 04:16:44", "sell", "4", "527.71", "514.26", "6.91", "538.00", "s"],
];
const tone = (v) => (v.startsWith("-") ? "red" : "blue");
document.getElementById("rows").innerHTML = trades.map(([s, id, time, type, vol, open, price, swap, profit, note]) => {
  const c = type === "buy" ? "#0c62a6" : "#dc3c3c";
  return `<tr><td class="left"><span class="sym"><svg class="doc" viewBox="0 0 12 15"><rect x="1.500" y=".5" width="9" height="14" rx="1.500" fill="#fff" stroke="${c}" stroke-width="1.200"/><path d="M4 4.500h3M4 7.500h4" stroke="${c}"/></svg>${s}</span></td><td class="left">${id}</td><td>${time}</td><td>${type}</td><td>${vol}</td><td>${open}</td><td></td><td></td><td>${price}</td><td class="${tone(swap)}">${swap}</td><td class="${tone(profit)}"><span class="profit">${profit}<button class="close" aria-label="Закрыть позицию"><svg class="x8"><use href="#x"/></svg></button></span></td><td>${note}</td></tr>`;
}).join("");
```
